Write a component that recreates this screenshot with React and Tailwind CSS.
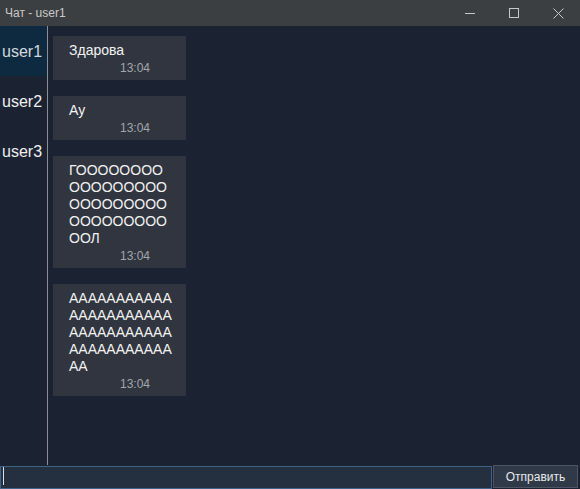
import { useState } from 'react';

const users = ['user1', 'user2', 'user3'];

const messages = [
  { id: 1, text: 'Здарова', time: '13:04' },
  { id: 2, text: 'Ау', time: '13:04' },
  { id: 3, text: 'Г' + 'О'.repeat(37) + 'Л', time: '13:04' },
  { id: 4, text: 'А'.repeat(46), time: '13:04' },
];

const App = () => {
  const [active, setActive] = useState('user1');
  const [draft, setDraft] = useState('');

  return (
    <div className="w-[580px] h-[489px] flex flex-col bg-[#1b2232] overflow-hidden" style={{ fontFamily: '"Liberation Sans", Arial, sans-serif' }}>
      {/* title bar */}
      <div className="h-[26px] bg-[#3c3f41] flex items-center shrink-0">
        <span className="pl-[5px] text-[12px] text-[#c9c9c9] flex-1">Чат - {active}</span>
        <div className="flex h-full">
          <button className="w-[44px] h-full flex items-center justify-center">
            <svg width="10" height="10" viewBox="0 0 10 10"><path d="M0 5.5h10" stroke="#c8c8c8" strokeWidth="1" /></svg>
          </button>
          <button className="w-[44px] h-full flex items-center justify-center">
            <svg width="10" height="10" viewBox="0 0 10 10"><rect x="0.5" y="0.5" width="9" height="9" fill="none" stroke="#c8c8c8" strokeWidth="1" /></svg>
          </button>
          <button className="w-[44px] h-full flex items-center justify-center">
            <svg width="11" height="11" viewBox="0 0 11 11"><path d="M0.5 0.5l10 10M10.5 0.5l-10 10" stroke="#c8c8c8" strokeWidth="1" /></svg>
          </button>
        </div>
      </div>

      <div className="flex flex-1 min-h-0">
        {/* users */}
        <div className="w-[48px] border-r border-[#8a8f96] flex flex-col shrink-0">
          {users.map((u) => (
            <div
              key={u}
              onClick={() => setActive(u)}
              className={`h-[50px] flex items-center pl-[2px] pt-[1px] text-[16px] cursor-pointer ${
                active === u ? 'bg-[#0e2a40] text-[#d4d8dc]' : 'text-[#f0f0f0]'
              }`}
            >
              {u}
            </div>
          ))}
        </div>

        {/* messages */}
        <div className="flex-1 pt-[10px] pl-[5px] flex flex-col gap-4">
          {messages.map((m) => (
            <div key={m.id} className="w-[133px] bg-[#30353f] pt-[6px] pb-[4px] pl-[16px] pr-[13px]">
              <div className="text-[14px] leading-[17px] text-[#f2f2f2] break-all">{m.text}</div>
              <div className="mt-[2px] text-[12px] leading-[15px] text-[#a3a7ad] pl-[51px]">{m.time}</div>
            </div>
          ))}
        </div>
      </div>

      {/* input */}
      <div className="h-[24px] flex shrink-0 pb-[1px]">
        <div className="relative w-[492px] h-[23px]">
          <input
            className="w-full h-full bg-[#243040] border border-[#3e638a] outline-none text-[13px] text-[#e5e5e5] px-[3px]"
            value={draft}
            onChange={(e) => setDraft(e.target.value)}
          />
          {draft === '' && <span className="absolute left-[3px] top-[2px] w-[1px] h-[18px] bg-[#e0e0e0]" />}
        </div>
        <button className="ml-[1px] w-[85px] h-[23px] bg-[#2f3947] border border-[#4b5563] text-[12px] text-[#e8e8e8] flex items-center justify-center">
          Отправить
        </button>
      </div>
    </div>
  );
};

export default App;
